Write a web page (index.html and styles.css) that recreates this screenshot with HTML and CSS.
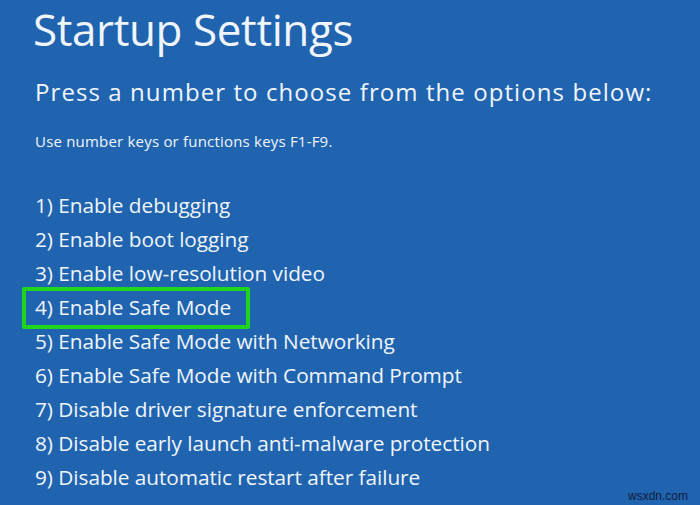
FILE: index.html
```html
<!DOCTYPE html>
<html>
<head>
<meta charset="utf-8">
<link rel="stylesheet" href="styles.css">
</head>
<body>
<main class="screen">
  <h1 class="title">Startup Settings</h1>
  <p class="lead">Press a number to choose from the options below:</p>
  <p class="hint">Use number keys or functions keys F1-F9.</p>
  <ol class="options">
    <li class="opt">1) Enable debugging</li>
    <li class="opt">2) Enable boot logging</li>
    <li class="opt">3) Enable low-resolution video</li>
    <li class="opt selected">4) Enable Safe Mode</li>
    <li class="opt">5) Enable Safe Mode with Networking</li>
    <li class="opt">6) Enable Safe Mode with Command Prompt</li>
    <li class="opt">7) Disable driver signature enforcement</li>
    <li class="opt">8) Disable early launch anti-malware protection</li>
    <li class="opt">9) Disable automatic restart after failure</li>
  </ol>
  <div class="watermark">wsxdn.com</div>
</main>
</body>
</html>
```
FILE: styles.css
```css
html, body {
  margin: 0;
  padding: 0;
  width: 700px;
  height: 505px;
  overflow: hidden;
  background: #2064b0;
}
.screen {
  position: relative;
  width: 700px;
  height: 505px;
  box-sizing: border-box;
  padding: 3px 0 0 33px;
  color: #f0f5fb;
  font-family: "Open Sans", "Noto Sans", sans-serif;
  display: flex;
  flex-direction: column;
}
.title {
  margin: 0;
  font-weight: 400;
  font-size: 44px;
  line-height: 52px;
  letter-spacing: -0.4px;
}
.lead {
  margin: 22px 0 0 2px;
  font-size: 24px;
  line-height: 30px;
  letter-spacing: 1.08px;
}
.hint {
  margin: 24px 0 0 2px;
  font-size: 15px;
  line-height: 20px;
  letter-spacing: 0.2px;
}
.options {
  list-style: none;
  margin: 37px 0 0 2px;
  padding: 0;
  display: flex;
  flex-direction: column;
}
.opt {
  font-size: 20.8px;
  line-height: 34px;
  height: 34px;
  letter-spacing: -0.05px;
}
.selected {
  position: relative;
}
.selected::before {
  content: "";
  position: absolute;
  left: -13px;
  top: -3px;
  width: 228px;
  height: 42px;
  box-sizing: border-box;
  border: 4px solid #1ed61e;
  border-radius: 2px;
}
.watermark {
  position: absolute;
  right: 12px;
  bottom: 2px;
  font-family: "Liberation Sans", Arial, sans-serif;
  font-size: 12px;
  color: #101c3c;
}
```
